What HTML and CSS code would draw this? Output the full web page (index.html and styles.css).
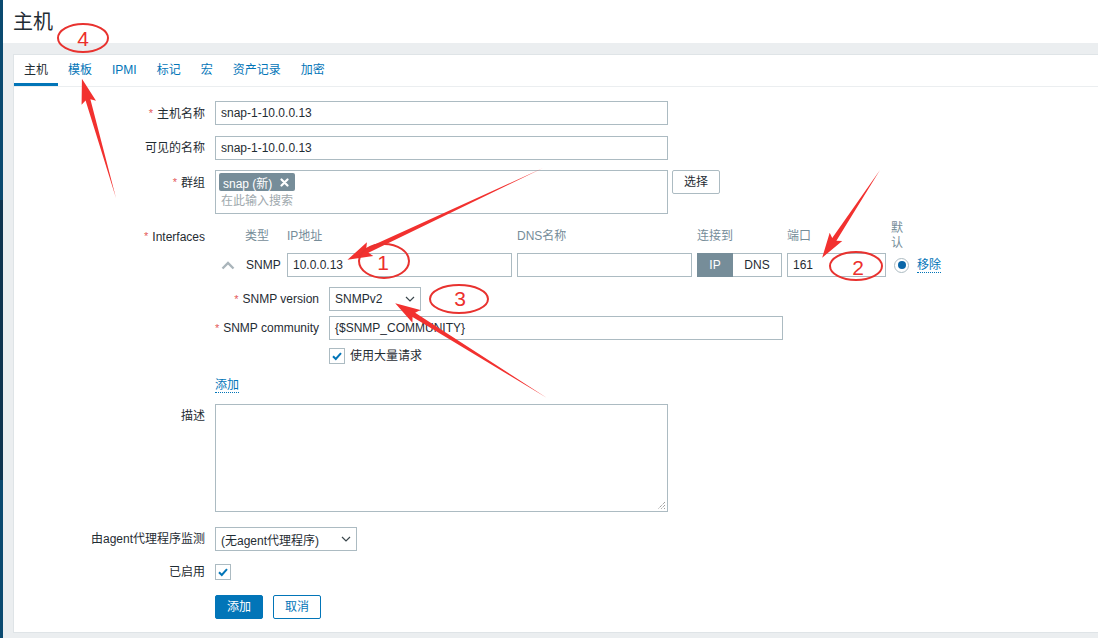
FILE: index.html
```html
<!DOCTYPE html>
<html lang="zh">
<head>
<meta charset="utf-8">
<title>主机</title>
<link rel="stylesheet" href="styles.css">
</head>
<body>
<div class="app">
  <aside class="rail"></aside>
  <main class="main">
    <header class="page-header"><h1>主机</h1></header>
    <div class="content">
      <section class="panel">
        <nav class="tabs">
          <span class="tab active">主机</span>
          <a class="tab">模板</a>
          <a class="tab">IPMI</a>
          <a class="tab">标记</a>
          <a class="tab">宏</a>
          <a class="tab">资产记录</a>
          <a class="tab">加密</a>
        </nav>
        <div class="form">
          <div class="row">
            <div class="lbl req">主机名称</div>
            <div class="ctl"><div class="input w-453">snap-1-10.0.0.13</div></div>
          </div>
          <div class="row">
            <div class="lbl">可见的名称</div>
            <div class="ctl"><div class="input w-453">snap-1-10.0.0.13</div></div>
          </div>
          <div class="row">
            <div class="lbl req">群组</div>
            <div class="ctl ctl-flex">
              <div class="multi">
                <div class="tags">
                  <span class="tag">snap (新)
                    <svg class="tag-x" width="9" height="9" viewBox="0 0 9 9"><path d="M1.5 1.5 L7.5 7.5 M7.5 1.5 L1.5 7.5" stroke="#fff" stroke-width="2.2" stroke-linecap="round"/></svg>
                  </span>
                </div>
                <div class="placeholder">在此输入搜索</div>
              </div>
              <span class="btn-grey">选择</span>
            </div>
          </div>
          <div class="row row-iface">
            <div class="lbl lbl-iface req">Interfaces</div>
            <div class="ctl">
              <div class="iface-grid">
                <div></div>
                <div class="th">类型</div>
                <div class="th">IP地址</div>
                <div class="th">DNS名称</div>
                <div class="th">连接到</div>
                <div class="th">端口</div>
                <div class="th th-def">默认</div>
                <div></div>

                <div class="caret"><svg width="14" height="9" viewBox="0 0 14 9"><polyline points="1.5,7.5 7,2 12.5,7.5" fill="none" stroke="#aab5bb" stroke-width="2.4"/></svg></div>
                <div class="type">SNMP</div>
                <div class="input">10.0.0.13</div>
                <div class="input"></div>
                <div class="toggle"><span class="tg on">IP</span><span class="tg">DNS</span></div>
                <div class="input">161</div>
                <div class="radio-cell"><span class="radio"><span class="dot"></span></span></div>
                <div><a class="link">移除</a></div>
              </div>
              <div class="snmp">
                <div class="srow">
                  <div class="slbl req">SNMP version</div>
                  <div class="select w-92"><span>SNMPv2</span><svg width="10" height="6" viewBox="0 0 10 6"><polyline points="1,1 5,5 9,1" fill="none" stroke="#3b474d" stroke-width="1.2"/></svg></div>
                </div>
                <div class="srow">
                  <div class="slbl req">SNMP community</div>
                  <div class="input w-454">{$SNMP_COMMUNITY}</div>
                </div>
                <div class="srow srow-cb">
                  <div></div>
                  <div class="cb-line">
                    <span class="cb"><svg width="14" height="14" viewBox="0 0 14 14"><polyline points="3,7.2 5.8,10 11,4.2" fill="none" stroke="#0275b8" stroke-width="2"/></svg></span>
                    <span>使用大量请求</span>
                  </div>
                </div>
              </div>
            </div>
          </div>
          <div class="row row-add">
            <div class="lbl"></div>
            <div class="ctl"><a class="link">添加</a></div>
          </div>
          <div class="row row-desc">
            <div class="lbl">描述</div>
            <div class="ctl"><div class="textarea"><svg class="grip" width="10" height="10" viewBox="0 0 10 10"><path d="M9 2 L2 9 M9 5 L5 9 M9 8 L8 9" stroke="#777" stroke-width="1" stroke-dasharray="1 1"/></svg></div></div>
          </div>
          <div class="row row-proxy">
            <div class="lbl">由agent代理程序监测</div>
            <div class="ctl"><div class="select w-142"><span>(无agent代理程序)</span><svg width="10" height="6" viewBox="0 0 10 6"><polyline points="1,1 5,5 9,1" fill="none" stroke="#3b474d" stroke-width="1.2"/></svg></div></div>
          </div>
          <div class="row row-enabled">
            <div class="lbl">已启用</div>
            <div class="ctl ctl-center"><span class="cb"><svg width="14" height="14" viewBox="0 0 14 14"><polyline points="3,7.2 5.8,10 11,4.2" fill="none" stroke="#0275b8" stroke-width="2"/></svg></span></div>
          </div>
          <div class="row row-btns">
            <div class="lbl"></div>
            <div class="ctl ctl-flex btns">
              <span class="btn-primary">添加</span>
              <span class="btn-alt">取消</span>
            </div>
          </div>
        </div>
      </section>
    </div>
  </main>
</div>

<svg class="marks" width="1098" height="638" viewBox="0 0 1098 638">
  <g fill="#f2312f">
    <polygon transform="translate(116,198) rotate(-105.95)" points="0,0 102,-2.5 99,-7.5 124,0 99,7.5 102,2.5"/>
    <polygon transform="translate(543,168) rotate(154.86)" points="0,0 194,-2.5 191,-7.5 216,0 191,7.5 194,2.5"/>
    <polygon transform="translate(880,170) rotate(123.4)" points="0,0 83,-2.5 80,-7.5 105,0 80,7.5 83,2.5"/>
    <polygon transform="translate(547,398) rotate(-148)" points="0,0 157,-2.5 154,-7.5 179,0 154,7.5 157,2.5"/>
  </g>
  <g fill="none" stroke="#e8322f" stroke-width="2">
    <ellipse cx="83" cy="38" rx="25" ry="14"/>
    <ellipse cx="384" cy="261" rx="25" ry="17"/>
    <ellipse cx="856" cy="266" rx="26" ry="14"/>
    <ellipse cx="459" cy="299" rx="29" ry="14"/>
  </g>
  <g fill="#ec2f2c" font-family="Liberation Sans, Arial, sans-serif" font-size="21" text-anchor="middle">
    <text x="83" y="46">4</text>
    <text x="383" y="270">1</text>
    <text x="858" y="275">2</text>
    <text x="460" y="306">3</text>
  </g>
</svg>
</body>
</html>
```
FILE: styles.css
```css
html, body {
  margin: 0;
  padding: 0;
}
body {
  position: relative;
  width: 1098px;
  height: 638px;
  overflow: hidden;
  background: #ebeef0;
  color: #1f2c33;
  font-family: "Liberation Sans", "Noto Sans CJK SC", sans-serif;
  font-size: 12px;
}
.app {
  display: flex;
  height: 638px;
}
.rail {
  flex: none;
  width: 3px;
  background: linear-gradient(to bottom, #0b4a70 0, #0b4a70 200px, #0f3550 200px, #0f3550 480px, #0b4a70 480px, #0b4a70 100%);
}
.main {
  flex: 1;
  min-width: 0;
  display: flex;
  flex-direction: column;
}
.page-header {
  flex: none;
  height: 43px;
  background: #fff;
  display: flex;
  align-items: center;
  padding-left: 10px;
}
.page-header h1 {
  margin: 0;
  font-size: 20px;
  font-weight: normal;
  line-height: 24px;
  color: #1f2c33;
}
.content {
  flex: 1;
  display: flex;
  flex-direction: column;
  padding: 11px 0 5px 10px;
}
.panel {
  flex: 1;
  background: #fff;
  border: 1px solid #dfe4e7;
  border-right: none;
}
.tabs {
  display: flex;
  border-bottom: 1px solid #ebeef0;
}
.tab {
  padding: 2px 10px 0;
  line-height: 26px;
  border-bottom: 3px solid transparent;
  color: #0275b8;
}
.tab.active {
  color: #1f2c33;
  border-bottom-color: #0275b8;
}
.form {
  padding-top: 14px;
}
.row {
  display: grid;
  grid-template-columns: 191px 1fr;
  column-gap: 10px;
  margin-top: 10px;
}
.row:first-child {
  margin-top: 0;
}
.lbl {
  text-align: right;
  line-height: 24px;
  white-space: nowrap;
}
.req::before {
  content: "*";
  color: #e45959;
  margin-right: 4px;
  font-size: 11px;
  vertical-align: 1px;
}
.ctl-flex {
  display: flex;
  align-items: flex-start;
}
.ctl-center {
  display: flex;
  align-items: center;
}
.input {
  box-sizing: border-box;
  height: 24px;
  border: 1px solid #acbbc2;
  background: #fff;
  padding: 0 5px;
  line-height: 22px;
  white-space: nowrap;
  overflow: hidden;
}
.w-453 { width: 453px; }
.w-454 { width: 454px; }
.w-92 { width: 92px; }
.w-142 { width: 142px; }

.multi {
  box-sizing: border-box;
  width: 453px;
  height: 44px;
  border: 1px solid #acbbc2;
  padding: 2px 3px;
}
.tags {
  display: flex;
}
.tag {
  display: inline-flex;
  align-items: center;
  gap: 8px;
  height: 18px;
  padding: 0 6px 0 4px;
  background: #768d99;
  color: #fff;
  border-radius: 2px;
}
.tag-x {
  display: block;
}
.placeholder {
  padding-left: 2px;
  line-height: 20px;
  color: #a0a9ae;
}
.btn-grey {
  box-sizing: border-box;
  margin-left: 4px;
  width: 48px;
  height: 24px;
  line-height: 22px;
  text-align: center;
  border: 1px solid #acbbc2;
  border-radius: 2px;
  background: #fff;
}

.row-iface {
  margin-top: 7px;
}
.lbl-iface {
  line-height: 30px;
}
.iface-grid {
  display: grid;
  grid-template-columns: 25px 37px 225px 175px 85px 99px 21px auto;
  column-gap: 5px;
  row-gap: 2px;
  align-items: center;
}
.th {
  color: #768d99;
  line-height: 15px;
}
.th-def {
  word-break: break-all;
}
.caret {
  display: flex;
  justify-content: center;
}
.caret svg { display: block; }
.type {
  padding-left: 1px;
}
.toggle {
  display: flex;
  height: 24px;
}
.tg {
  box-sizing: border-box;
  height: 24px;
  line-height: 22px;
  text-align: center;
  border: 1px solid #acbbc2;
}
.tg.on {
  width: 36px;
  background: #768d99;
  border-color: #768d99;
  color: #fff;
}
.tg:last-child {
  flex: 1;
  border-left: none;
}
.radio-cell {
  display: flex;
  justify-content: center;
}
.radio {
  box-sizing: border-box;
  width: 15px;
  height: 15px;
  border: 1px solid #acbbc2;
  border-radius: 50%;
  display: flex;
  align-items: center;
  justify-content: center;
}
.dot {
  width: 8px;
  height: 8px;
  border-radius: 50%;
  background: #0a66a8;
}
.link {
  color: #0275b8;
  border-bottom: 1px dotted #0275b8;
  line-height: 14px;
  display: inline-block;
}
.snmp {
  margin-top: 10px;
  display: flex;
  flex-direction: column;
  gap: 5px;
}
.srow {
  display: grid;
  grid-template-columns: 104px 1fr;
  column-gap: 10px;
  align-items: center;
}
.slbl {
  display: flex;
  justify-content: flex-end;
  white-space: nowrap;
  line-height: 24px;
}
.srow-cb {
  margin-top: 3px;
}
.select {
  box-sizing: border-box;
  height: 24px;
  border: 1px solid #acbbc2;
  padding: 0 5px;
  display: flex;
  align-items: center;
  justify-content: space-between;
  white-space: nowrap;
}
.select svg { flex: none; }
.cb-line {
  display: flex;
  align-items: center;
  gap: 5px;
  line-height: 16px;
}
.cb {
  box-sizing: border-box;
  width: 16px;
  height: 16px;
  border: 1px solid #acbbc2;
  display: flex;
  align-items: center;
  justify-content: center;
  background: #fff;
}
.cb svg { display: block; }
.row-add {
  margin-top: 10px;
}
.row-add .ctl {
  line-height: 22px;
}
.row-desc {
  margin-top: 8px;
}
.textarea {
  box-sizing: border-box;
  position: relative;
  width: 453px;
  height: 108px;
  border: 1px solid #acbbc2;
}
.grip {
  position: absolute;
  right: 1px;
  bottom: 1px;
}
.row-proxy {
  margin-top: 15px;
}
.row-enabled {
  margin-top: 9px;
}
.row-btns {
  margin-top: 11px;
}
.btns {
  gap: 10px;
}
.btn-primary, .btn-alt {
  box-sizing: border-box;
  width: 48px;
  height: 24px;
  line-height: 22px;
  text-align: center;
  border: 1px solid #0275b8;
  border-radius: 2px;
}
.btn-primary {
  background: #0275b8;
  color: #fff;
}
.btn-alt {
  background: #fff;
  color: #0275b8;
}
.marks {
  position: absolute;
  left: 0;
  top: 0;
  pointer-events: none;
}
```
